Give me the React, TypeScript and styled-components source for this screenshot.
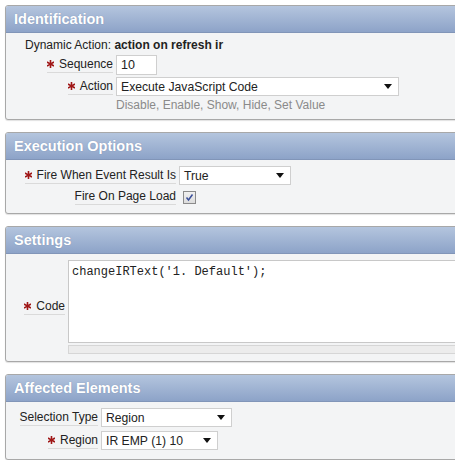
import React from "react";
import styled, { createGlobalStyle } from "styled-components";

const GlobalStyle = createGlobalStyle`
  html, body {
    margin: 0;
    padding: 0;
    background: #ffffff;
    overflow: hidden;
  }
  body {
    font-family: "Liberation Sans", Arial, sans-serif;
    font-size: 12px;
    color: #222;
  }
`;

const Page = styled.div`
  display: flex;
  flex-direction: column;
  gap: 12px;
  padding: 5px 0 0 5px;
  width: 470px;
`;

const Panel = styled.section`
  border: 1px solid #a8a8a8;
  border-radius: 3px;
  background: #f3f4f5;
  box-shadow: 0 1px 1px rgba(0, 0, 0, 0.12);
  overflow: hidden;
`;

const PanelHeader = styled.h2`
  margin: 0;
  height: 26px;
  line-height: 26px;
  padding-left: 8px;
  font-size: 14.5px;
  font-weight: bold;
  color: #ffffff;
  text-shadow: 0 0 1px rgba(60, 80, 120, 0.4);
  background: linear-gradient(#b4c5de, #8da3c8);
  border-bottom: 1px solid #8195b8;
`;

const PanelBody = styled.div<{ $pad: string }>`
  padding: ${(p) => p.$pad};
`;

const Form = styled.div<{ $labelWidth: number; $gap?: number }>`
  display: grid;
  grid-template-columns: ${(p) => p.$labelWidth}px 1fr;
  row-gap: ${(p) => p.$gap ?? 2}px;
  align-items: center;
`;

const LabelCell = styled.div`
  display: flex;
  justify-content: flex-end;
  padding-right: 3px;
`;

const Label = styled.span`
  display: inline-flex;
  align-items: center;
  gap: 5px;
  padding: 0 0 1px 0;
  border-bottom: 1px solid #dadada;
  white-space: nowrap;
`;

const Info = styled.div`
  padding: 0 0 0 19px;
  height: 18px;
  line-height: 16px;
`;

const InfoValue = styled.b`
  font-weight: bold;
`;

const TextInput = styled.div<{ $width: number }>`
  width: ${(p) => p.$width}px;
  height: 20px;
  line-height: 18px;
  box-sizing: border-box;
  padding-left: 4px;
  background: #fff;
  border: 1px solid #cfcfcf;
  font-size: 12.5px;
`;

const Select = styled.div<{ $width: number }>`
  width: ${(p) => p.$width}px;
  height: 19px;
  box-sizing: border-box;
  display: flex;
  align-items: center;
  justify-content: space-between;
  padding: 0 6px 0 4px;
  background: #fff;
  border: 1px solid #cfcfcf;
  font-size: 12.2px;
`;

const Arrow = styled.span`
  width: 0;
  height: 0;
  border-left: 4px solid transparent;
  border-right: 4px solid transparent;
  border-top: 5px solid #111;
`;

const Help = styled.div`
  color: #8a8a8a;
  line-height: 15px;
`;

const Check = styled.span`
  display: inline-flex;
  align-items: center;
  justify-content: center;
  width: 11px;
  height: 11px;
  margin-left: 4px;
  border: 1px solid #8b8b8b;
  background: linear-gradient(#f0f0f0, #dcdcdc);
`;

const CheckRow = styled.div`
  display: flex;
  align-items: center;
  height: 20px;
`;

const CodeArea = styled.div`
  display: flex;
  flex-direction: column;
  gap: 2px;
`;

const CodeBox = styled.div`
  height: 83px;
  background: #fff;
  border: 1px solid #c8c8c8;
  border-right: none;
  padding: 4px 0 0 3px;
  box-sizing: border-box;
  font-family: "Liberation Mono", "Courier New", monospace;
  font-size: 12px;
`;

const CodeFooter = styled.div`
  height: 9px;
  box-sizing: border-box;
  background: #ececec;
  border: 1px solid #d6d6d6;
  border-right: none;
`;

const Star = () => (
  <svg width="7" height="8" viewBox="0 0 7 8">
    <g stroke="#a01818" strokeWidth="1.6" strokeLinecap="square">
      <line x1="3.5" y1="0.8" x2="3.5" y2="7.2" />
      <line x1="0.7" y1="2.4" x2="6.3" y2="5.6" />
      <line x1="0.7" y1="5.6" x2="6.3" y2="2.4" />
    </g>
  </svg>
);

const Field = ({ label, required }: { label: string; required?: boolean }) => (
  <LabelCell>
    <Label>
      {required ? <Star /> : null}
      {label}
    </Label>
  </LabelCell>
);

const DropDown = ({ value, width }: { value: string; width: number }) => (
  <Select $width={width}>
    <span>{value}</span>
    <Arrow />
  </Select>
);

const App = () => {
  return (
    <>
      <GlobalStyle />
      <Page>
        <Panel>
          <PanelHeader>Identification</PanelHeader>
          <PanelBody $pad="4px 0 6px 0">
            <Info>
              Dynamic Action: <InfoValue>action on refresh ir</InfoValue>
            </Info>
            <Form $labelWidth={110}>
              <Field label="Sequence" required />
              <TextInput $width={41}>10</TextInput>
              <Field label="Action" required />
              <div>
                <DropDown value="Execute JavaScript Code" width={283} />
              </div>
              <div />
              <Help>Disable, Enable, Show, Hide, Set Value</Help>
            </Form>
          </PanelBody>
        </Panel>

        <Panel>
          <PanelHeader>Execution Options</PanelHeader>
          <PanelBody $pad="6px 0 6px 0">
            <Form $labelWidth={173} $gap={2}>
              <Field label="Fire When Event Result Is" required />
              <DropDown value="True" width={112} />
              <Field label="Fire On Page Load" />
              <CheckRow>
                <Check>
                  <svg width="9" height="9" viewBox="0 0 9 9">
                    <path d="M1.5 4.5 L3.5 7 L7.5 1.5" fill="none" stroke="#3a4f9a" strokeWidth="1.5" />
                  </svg>
                </Check>
              </CheckRow>
            </Form>
          </PanelBody>
        </Panel>

        <Panel>
          <PanelHeader>Settings</PanelHeader>
          <PanelBody $pad="6px 0 7px 0">
            <Form $labelWidth={62}>
              <Field label="Code" required />
              <CodeArea>
                <CodeBox>changeIRText('1. Default');</CodeBox>
                <CodeFooter />
              </CodeArea>
            </Form>
          </PanelBody>
        </Panel>

        <Panel>
          <PanelHeader>Affected Elements</PanelHeader>
          <PanelBody $pad="6px 0 9px 0">
            <Form $labelWidth={95} $gap={4}>
              <Field label="Selection Type" />
              <DropDown value="Region" width={131} />
              <Field label="Region" required />
              <DropDown value="IR EMP (1) 10" width={117} />
            </Form>
          </PanelBody>
        </Panel>
      </Page>
    </>
  );
};

export default App;
